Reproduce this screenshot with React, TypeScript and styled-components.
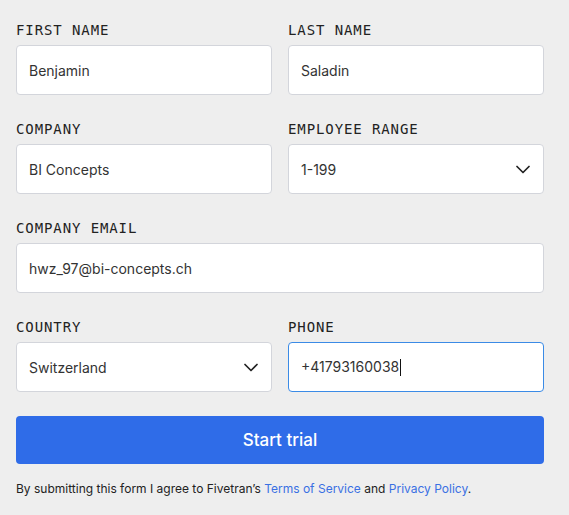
import React from "react";
import styled, { createGlobalStyle } from "styled-components";

const Global = createGlobalStyle`
  html, body { margin: 0; padding: 0; background: #eeeeee; }
  body { font-family: Inter, "Noto Sans", sans-serif; }
`;

const Form = styled.form`
  width: 528px;
  padding: 22px 16px 0 16px;
  display: grid;
  grid-template-columns: 256px 256px;
  column-gap: 16px;
  row-gap: 26px;
`;

const Field = styled.div<{ $wide?: boolean }>`
  display: flex;
  flex-direction: column;
  gap: 7px;
  grid-column: ${(p) => (p.$wide ? "1 / span 2" : "auto")};
`;

const Label = styled.label`
  font-family: "DejaVu Sans Mono", "Liberation Mono", monospace;
  font-size: 14px;
  line-height: 16px;
  letter-spacing: 0.9px;
  color: #222;
  text-transform: uppercase;
`;

const Box = styled.div<{ $focus?: boolean }>`
  height: 50px;
  box-sizing: border-box;
  background: #fff;
  border: 1px solid ${(p) => (p.$focus ? "#3b8be6" : "#d3d5db")};
  border-radius: 4px;
  display: flex;
  align-items: center;
  padding: 0 13px 0 12px;
  font-size: 14px;
  color: #333;
`;

const Value = styled.span`
  flex: 1;
  white-space: nowrap;
`;

const Caret = styled.span`
  display: inline-block;
  width: 1px;
  height: 17px;
  background: #111;
  vertical-align: middle;
  margin-left: 1px;
`;

const Chevron = () => (
  <svg width="14" height="9" viewBox="0 0 14 9" fill="none">
    <path d="M1 1.5l6 6 6-6" stroke="#222" strokeWidth="1.7" strokeLinecap="round" strokeLinejoin="round" />
  </svg>
);

const Submit = styled.button`
  grid-column: 1 / span 2;
  margin-top: -2px;
  height: 48px;
  border: none;
  border-radius: 4px;
  background: #2f6ce8;
  color: #fff;
  font-family: Inter, sans-serif;
  font-size: 17px;
  font-weight: 450;
`;

const Note = styled.p`
  grid-column: 1 / span 2;
  margin: -9px 0 0 0;
  font-size: 12px;
  line-height: 15px;
  color: #222;
`;

const Link = styled.a`
  color: #3a70e3;
  text-decoration: none;
`;

export default function App() {
  return (
    <>
      <Global />
      <Form>
        <Field>
          <Label>First Name</Label>
          <Box><Value>Benjamin</Value></Box>
        </Field>
        <Field>
          <Label>Last Name</Label>
          <Box><Value>Saladin</Value></Box>
        </Field>
        <Field>
          <Label>Company</Label>
          <Box><Value>BI Concepts</Value></Box>
        </Field>
        <Field>
          <Label>Employee Range</Label>
          <Box><Value>1-199</Value><Chevron /></Box>
        </Field>
        <Field $wide>
          <Label>Company Email</Label>
          <Box><Value>hwz_97@bi-concepts.ch</Value></Box>
        </Field>
        <Field>
          <Label>Country</Label>
          <Box><Value>Switzerland</Value><Chevron /></Box>
        </Field>
        <Field>
          <Label>Phone</Label>
          <Box $focus><Value>+41793160038<Caret /></Value></Box>
        </Field>
        <Submit type="button">Start trial</Submit>
        <Note>
          By submitting this form I agree to Fivetran’s <Link href="#">Terms of Service</Link> and{" "}
          <Link href="#">Privacy Policy</Link>.
        </Note>
      </Form>
    </>
  );
}
